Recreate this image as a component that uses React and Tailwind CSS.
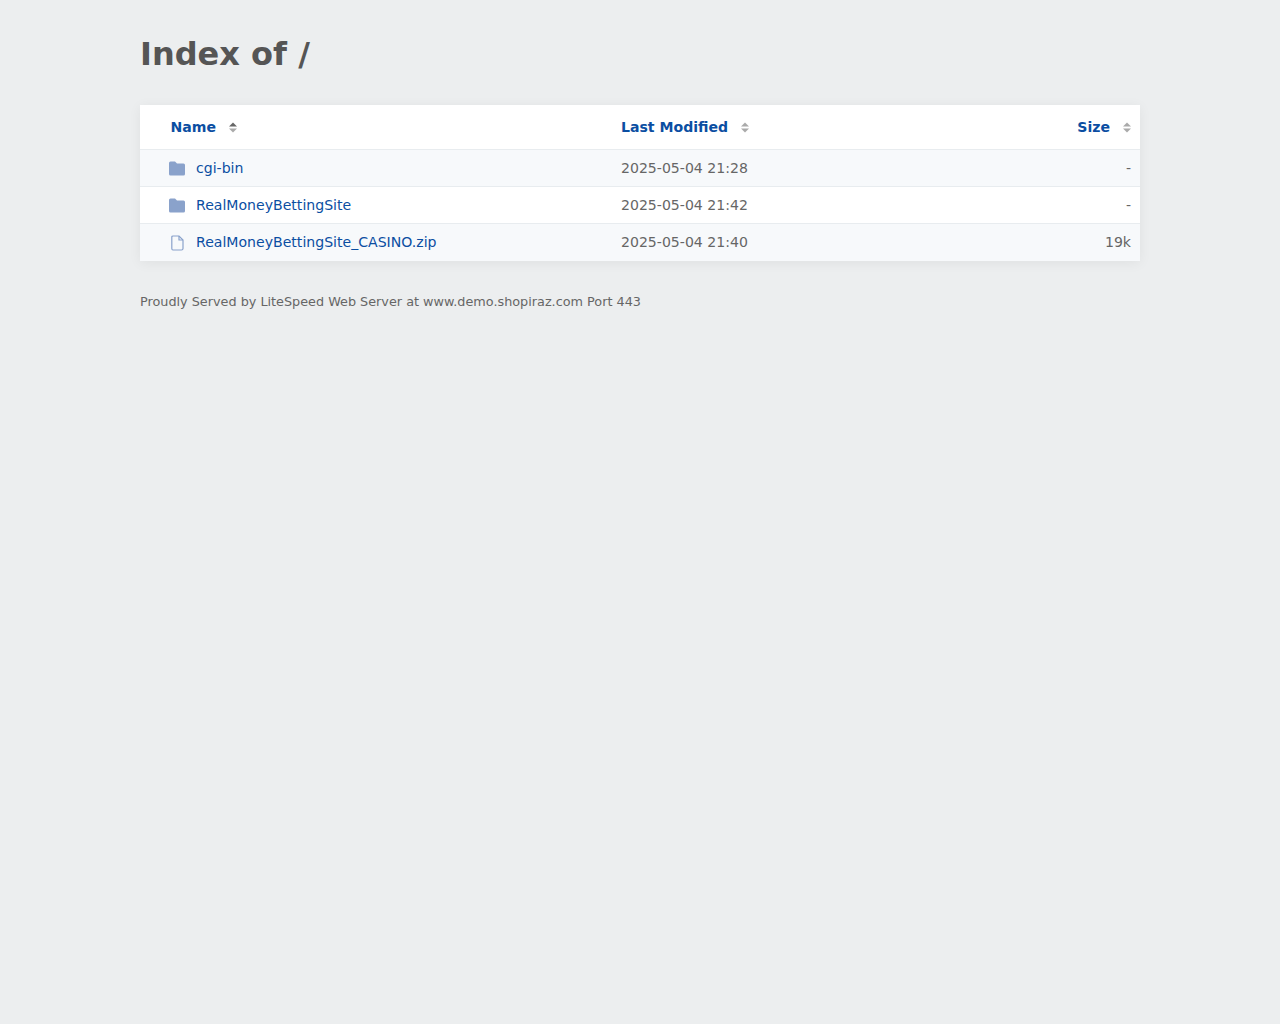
const rows = [
  { name: "cgi-bin", modified: "2025-05-04 21:28", size: "-", dir: true },
  { name: "RealMoneyBettingSite", modified: "2025-05-04 21:42", size: "-", dir: true },
  { name: "RealMoneyBettingSite_CASINO.zip", modified: "2025-05-04 21:40", size: "19k", dir: false },
];

function SortIcon({ active }) {
  return (
    <svg width="10" height="11" viewBox="0 0 10 11" className="shrink-0">
      <path d="M5 0.5 L9 4.5 L1 4.5 Z" fill={active ? "#666" : "#aaa"} />
      <path d="M1 6.5 L9 6.5 L5 10.5 Z" fill="#aaa" />
    </svg>
  );
}

function FolderIcon() {
  return (
    <svg width="16" height="15" viewBox="0 0 16 15" className="shrink-0">
      <path d="M0 2 Q0 0.5 1.5 0.5 L6 0.5 L8 2.5 L14.5 2.5 Q16 2.5 16 4 L16 13 Q16 14.5 14.5 14.5 L1.5 14.5 Q0 14.5 0 13 Z" fill="#8aa2cb" />
    </svg>
  );
}

function FileIcon() {
  return (
    <svg width="13" height="16" viewBox="0 0 13 16" fill="none" className="shrink-0" stroke="#8aa2cb" strokeWidth="1.2">
      <path d="M2 1 L8 1 L12 5 L12 13.5 Q12 15 10.5 15 L2 15 Q0.8 15 0.8 13.5 L0.8 2 Q0.8 1 2 1 Z" />
      <path d="M8 1 L8 5 L12 5" />
    </svg>
  );
}

export default function App() {
  return (
    <div className="min-h-[1024px] bg-[#eceeef] font-['DejaVu_Sans',sans-serif]">
      <div className="mx-auto w-[1000px] pt-[34px]">
        <h1 className="text-[32px] leading-[40px] font-bold text-[#555555]">Index of /</h1>

        <div className="mt-[31px] bg-white shadow-[0_2px_12px_rgba(0,0,0,0.06)]">
          <div className="flex h-[45px] items-center border-b border-[#e8ecef] text-[14.08px] leading-[21px] font-bold text-[#0b4ea2]">
            <div className="flex w-[481px] items-center pl-[30.5px]">
              <span>Name</span>
              <span className="ml-[12px] flex"><SortIcon active /></span>
            </div>
            <div className="flex items-center">
              <span>Last Modified</span>
              <span className="ml-[11.5px] flex"><SortIcon /></span>
            </div>
            <div className="ml-auto flex items-center pr-[8px]">
              <span>Size</span>
              <span className="ml-3 flex"><SortIcon /></span>
            </div>
          </div>

          {rows.map((r, i) => (
            <div
              key={r.name}
              className={`flex h-[37px] items-center text-[14.08px] leading-[21px] ${i % 2 === 0 ? "bg-[#f7f9fb]" : "bg-white"} ${i < rows.length - 1 ? "border-b border-[#e8ecef]" : ""}`}
            >
              <div className="flex w-[481px] items-center">
                <div className="flex w-[56px] justify-center pl-[25px] pr-[7px]">
                  {r.dir ? <FolderIcon /> : <FileIcon />}
                </div>
                <a className="text-[#0b4ea2]">{r.name}</a>
              </div>
              <div className="text-[#666666]">{r.modified}</div>
              <div className="ml-auto pr-[9px] text-[#666666]">{r.size}</div>
            </div>
          ))}
        </div>

        <p className="mt-[33px] text-[12.8px] leading-[16px] text-[#666666]">
          Proudly Served by LiteSpeed Web Server at www.demo.shopiraz.com Port 443
        </p>
      </div>
    </div>
  );
}
